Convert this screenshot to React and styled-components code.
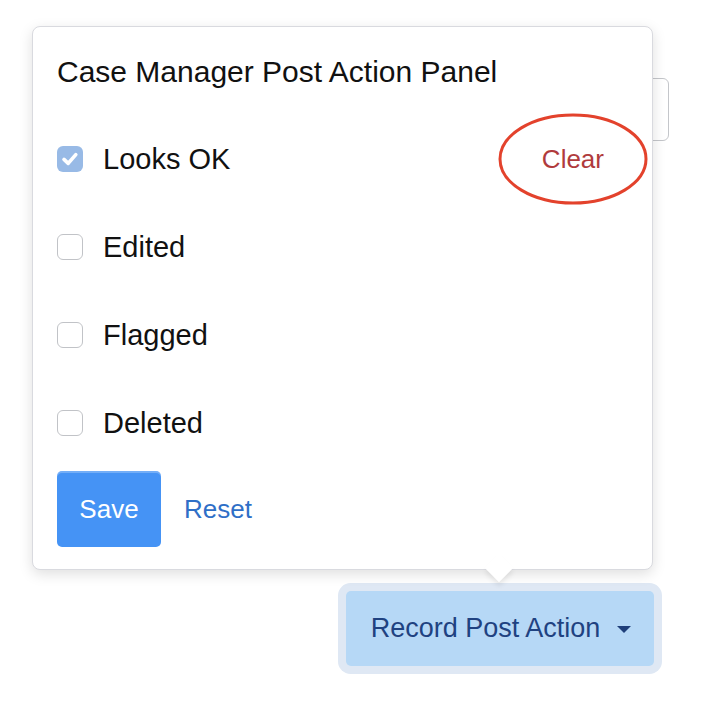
import React, { useState } from 'react';
import styled, { createGlobalStyle } from 'styled-components';

const GlobalStyle = createGlobalStyle`
  html, body {
    margin: 0;
    padding: 0;
    background: #ffffff;
  }
  body {
    font-family: "Liberation Sans", Arial, sans-serif;
    color: #1a1a1a;
  }
`;

const Page = styled.div`
  position: relative;
  width: 702px;
  height: 714px;
  display: flex;
  flex-direction: column;
  overflow: hidden;
`;

// the field that sits behind the popover (only its right edge shows)
const BackdropField = styled.div`
  margin-top: 78px;
  margin-left: auto;
  margin-right: 33px;
  width: 140px;
  height: 61px;
  border: 1.5px solid #c4c6ca;
  border-radius: 6px;
  background: #fff;
`;

const ButtonAnchor = styled.div`
  position: relative;
  margin-top: 450px;
  margin-left: 346px;
  width: 308px;
  height: 75px;
`;

const ToggleButton = styled.button`
  width: 100%;
  height: 100%;
  display: flex;
  align-items: center;
  justify-content: center;
  gap: 17px;
  padding: 0 22px 0 24px;
  border: none;
  border-radius: 5px;
  background: #b6d8f6;
  box-shadow: 0 0 0 8px #dfe8f4;
  color: #1f4281;
  font-family: "Liberation Sans", Arial, sans-serif;
  font-size: 27px;
  cursor: pointer;
`;

const Caret = styled.span`
  width: 0;
  height: 0;
  border-left: 7.5px solid transparent;
  border-right: 7.5px solid transparent;
  border-top: 7px solid #1f3f7a;
  margin-top: 2px;
`;

const Popover = styled.div`
  position: absolute;
  right: 1px;
  bottom: calc(100% + 21px);
  width: 621px;
  box-sizing: border-box;
  padding: 25px 24px 22px 24px;
  background: #fff;
  border: 1px solid #d9dadf;
  border-radius: 8px;
  box-shadow: 0 4px 14px rgba(0, 0, 0, 0.13);
`;

// popover tail, centred over the toggle button
const Arrow = styled.div`
  position: absolute;
  left: calc(50% - 11px);
  bottom: calc(100% + 13.5px);
  width: 20px;
  height: 20px;
  background: #fff;
  transform: rotate(45deg);
  box-shadow: 3px 3px 5px rgba(0, 0, 0, 0.08);
`;

const Title = styled.div`
  height: 40px;
  line-height: 40px;
  font-size: 30px;
  color: #111;
  margin-bottom: 23px;
`;

const Row = styled.label`
  position: relative;
  display: flex;
  align-items: center;
  height: 88px;
  gap: 20px;
  font-size: 29px;
  color: #111;
  cursor: pointer;
`;

const Box = styled.span`
  flex: none;
  width: 26px;
  height: 26px;
  box-sizing: border-box;
  border-radius: 6px;
  display: flex;
  align-items: center;
  justify-content: center;
  background: ${p => (p.$checked ? '#98bae6' : '#fff')};
  border: ${p => (p.$checked ? 'none' : '1.5px solid #c1c3c7')};
`;

const ClearButton = styled.button`
  position: relative;
  margin-left: auto;
  padding: 0 24px;
  border: none;
  background: transparent;
  color: #b03b3c;
  font-family: "Liberation Sans", Arial, sans-serif;
  font-size: 26px;
  line-height: 40px;
  cursor: pointer;
`;

const Annotation = styled.svg`
  position: absolute;
  left: -21px;
  top: calc(50% - 47px);
  width: 152px;
  height: 94px;
  pointer-events: none;
  overflow: visible;
`;

const Footer = styled.div`
  display: flex;
  align-items: center;
  gap: 23px;
  margin-top: 4px;
`;

const SaveButton = styled.button`
  width: 104px;
  height: 76px;
  border: none;
  border-radius: 5px;
  background: #4593f5;
  box-shadow: inset 0 2px 0 rgba(255, 255, 255, 0.25);
  color: #fff;
  font-family: "Liberation Sans", Arial, sans-serif;
  font-size: 26px;
  cursor: pointer;
`;

const LinkButton = styled.button`
  border: none;
  background: transparent;
  padding: 0;
  color: #2f6fc7;
  font-family: "Liberation Sans", Arial, sans-serif;
  font-size: 26px;
  cursor: pointer;
`;

const options = ['Looks OK', 'Edited', 'Flagged', 'Deleted'];

function Check() {
  return (
    <svg width="20" height="20" viewBox="0 0 20 20">
      <path d="M4 10.4 L8.2 14.4 L15.8 5.6" fill="none" stroke="#fff" strokeWidth="3.6"
        strokeLinecap="round" strokeLinejoin="round" />
    </svg>
  );
}

export default function App() {
  const [selected, setSelected] = useState('Looks OK');

  return (
    <Page>
      <GlobalStyle />
      <BackdropField />
      <ButtonAnchor>
        <Popover>
          <Title>Case Manager Post Action Panel</Title>
          {options.map(opt => (
            <Row key={opt} onClick={() => setSelected(opt)}>
              <Box $checked={selected === opt}>{selected === opt && <Check />}</Box>
              {opt}
              {opt === 'Looks OK' && (
                <ClearButton onClick={e => { e.preventDefault(); setSelected(null); }}>
                  Clear
                  <Annotation viewBox="0 0 152 94">
                    <ellipse cx="76" cy="47" rx="73" ry="44" fill="none" stroke="#e3422c" strokeWidth="3" />
                  </Annotation>
                </ClearButton>
              )}
            </Row>
          ))}
          <Footer>
            <SaveButton>Save</SaveButton>
            <LinkButton onClick={() => setSelected('Looks OK')}>Reset</LinkButton>
          </Footer>
        </Popover>
        <Arrow />
        <ToggleButton>
          Record Post Action
          <Caret />
        </ToggleButton>
      </ButtonAnchor>
    </Page>
  );
}
